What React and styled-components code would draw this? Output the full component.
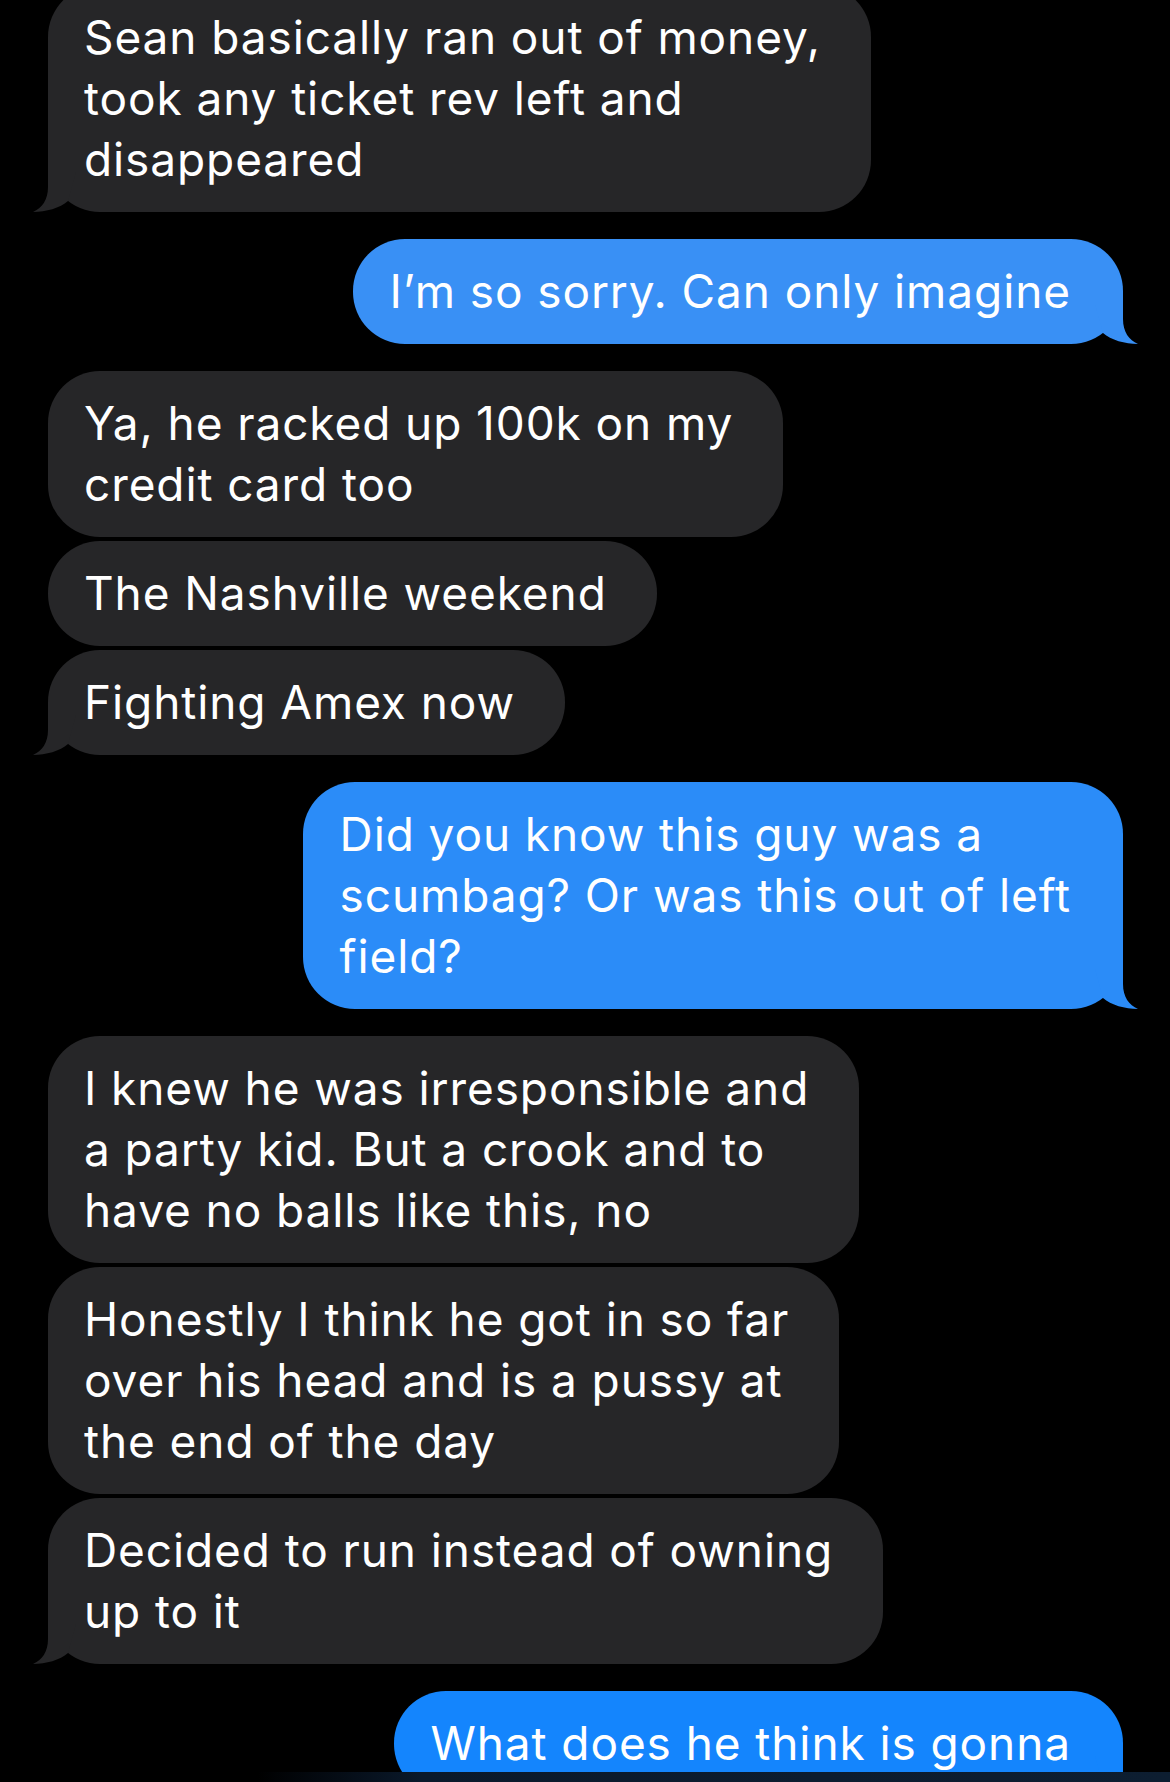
import React from 'react';
import styled, { createGlobalStyle } from 'styled-components';

const Global = createGlobalStyle`
  html, body { margin: 0; padding: 0; background: #000; }
  body { font-family: Inter, "Noto Sans", sans-serif; -webkit-font-smoothing: antialiased; }
`;

const Screen = styled.div`
  width: 1170px;
  height: 1782px;
  background: #000;
  display: flex;
  flex-direction: column;
  overflow: hidden;
`;

const Thread = styled.div`
  flex: 1;
  min-height: 0;
  overflow: hidden;
  display: flex;
  flex-direction: column;
  gap: 27px;
  padding: 0 47px 0 48px;
  & > :first-child { margin-top: -15px; }
`;

const Group = styled.div`
  flex-shrink: 0;
  display: flex;
  flex-direction: column;
  gap: 4px;
  align-items: ${p => (p.$me ? 'flex-end' : 'flex-start')};
`;

const Bubble = styled.div`
  position: relative;
  flex-shrink: 0;
  background: ${p => p.$color};
  color: #fff;
  border-radius: 52px;
  padding: 22px ${p => (p.$me ? '52px' : '50px')} 22px ${p => (p.$me ? '37px' : '36px')};
  font-size: 46px;
  line-height: 61px;
  letter-spacing: 0.9px;
  white-space: nowrap;
`;

const Line = styled.span`
  display: block;
  position: relative;
  z-index: 1;
`;

const TailSvg = styled.svg`
  position: absolute;
  bottom: 0;
  width: 44px;
  height: 60px;
  ${p => (p.$me ? 'right: -16px; transform: scaleX(-1);' : 'left: -16px;')}
`;

const BottomBar = styled.div`
  height: 10px;
  flex-shrink: 0;
  background: linear-gradient(to right, #000 0%, #000 22%, #0a192b 36%, #0c1c2f 70%, #0d1e31 100%);
`;

const GRAY = '#262628';

const Tail = ({ me, color }) => (
  <TailSvg $me={me} viewBox="0 0 44 60" aria-hidden="true">
    <path d="M16 8 L16 35 C16 48 10 56 1 60 C14 60 28 56 36 49 L44 20 L44 8 Z" fill={color} />
  </TailSvg>
);

const groups = [
  {
    me: false,
    color: GRAY,
    bubbles: [["Sean basically ran out of money,", "took any ticket rev left and", "disappeared"]],
  },
  {
    me: true,
    color: '#3990f5',
    bubbles: [["I\u2019m so sorry. Can only imagine"]],
  },
  {
    me: false,
    color: GRAY,
    bubbles: [
      ["Ya, he racked up 100k on my", "credit card too"],
      ["The Nashville weekend"],
      ["Fighting Amex now"],
    ],
  },
  {
    me: true,
    color: '#2b8cf8',
    bubbles: [["Did you know this guy was a", "scumbag? Or was this out of left", "field?"]],
  },
  {
    me: false,
    color: GRAY,
    bubbles: [
      ["I knew he was irresponsible and", "a party kid. But a crook and to", "have no balls like this, no"],
      ["Honestly I think he got in so far", "over his head and is a pussy at", "the end of the day"],
      ["Decided to run instead of owning", "up to it"],
    ],
  },
  {
    me: true,
    color: '#1485fd',
    bubbles: [["What does he think is gonna"]],
  },
];

export default function App() {
  return (
    <>
      <Global />
      <Screen>
        <Thread>
          {groups.map((g, gi) => (
            <Group key={gi} $me={g.me}>
              {g.bubbles.map((lines, bi) => (
                <Bubble key={bi} $me={g.me} $color={g.color}>
                  {lines.map((l, li) => (
                    <Line key={li}>{l}</Line>
                  ))}
                  {bi === g.bubbles.length - 1 && <Tail me={g.me} color={g.color} />}
                </Bubble>
              ))}
            </Group>
          ))}
        </Thread>
        <BottomBar />
      </Screen>
    </>
  );
}
